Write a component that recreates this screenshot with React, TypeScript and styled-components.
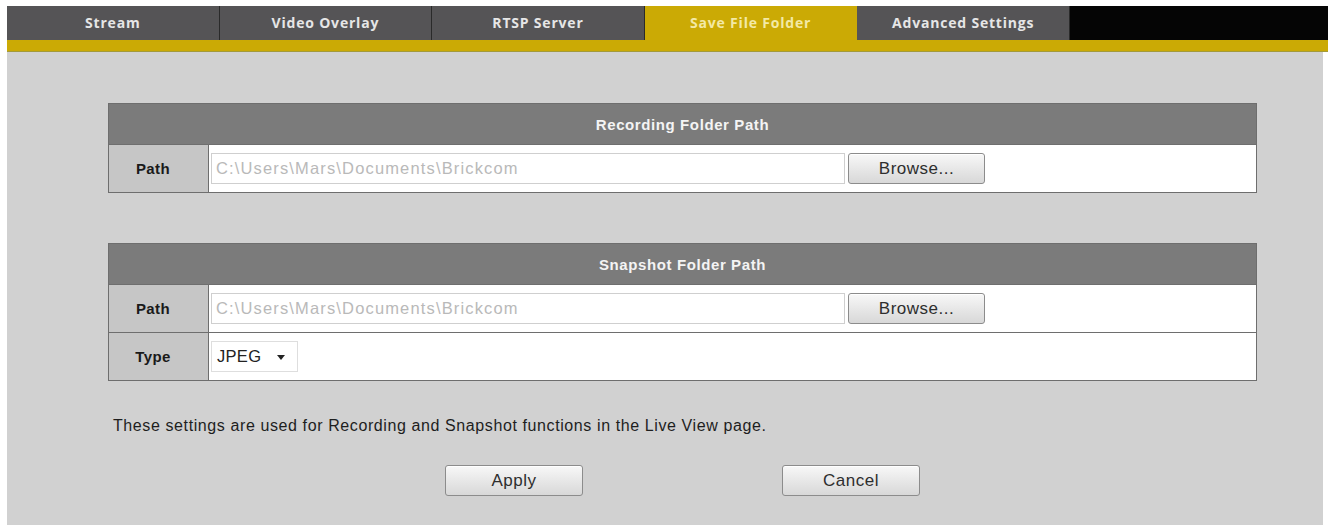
import React from 'react';
import styled, { createGlobalStyle } from 'styled-components';

const GlobalStyle = createGlobalStyle`
  html, body {
    margin: 0;
    padding: 0;
    background: #ffffff;
  }
  body {
    font-family: "Liberation Sans", Arial, sans-serif;
  }
`;

const Page = styled.div`
  padding: 6px 5px 4px 7px;
  width: 1328px;
  height: 529px;
  box-sizing: border-box;
`;

const Frame = styled.div`
  background: #d1d1d1;
  height: 100%;
  display: flex;
  flex-direction: column;
`;

const TabBar = styled.div`
  display: flex;
  height: 34px;
  background: #050505;
  margin-right: -5px;
`;

const Tab = styled.div<{ $active?: boolean }>`
  flex: 0 0 212.6px;
  display: flex;
  align-items: center;
  justify-content: center;
  box-sizing: border-box;
  background: ${p => (p.$active ? '#cbaa05' : '#555456')};
  border-right: 1px solid ${p => (p.$active ? '#cbaa05' : '#2a2a2a')};
  color: ${p => (p.$active ? '#f3e9a6' : '#e6e6e6')};
  font-family: "Open Sans", "DejaVu Sans", sans-serif;
  font-weight: 700;
  font-size: 14px;
  letter-spacing: 0.8px;
  padding-bottom: 2px;
`;

const YellowBar = styled.div`
  height: 11px;
  background: #cbaa05;
  border-bottom: 1px solid #a39a3a;
  margin-right: -5px;
`;

const Content = styled.div`
  padding: 51px 66px 0 101px;
  display: flex;
  flex-direction: column;
`;

const Panel = styled.div<{ $gap?: number }>`
  border: 1px solid #6e6e6e;
  background: #ffffff;
  margin-bottom: ${p => p.$gap ?? 0}px;
`;

const PanelHeader = styled.div`
  height: 40px;
  box-sizing: border-box;
  background: #7b7b7b;
  display: flex;
  align-items: center;
  justify-content: center;
  color: #f4f4f4;
  font-weight: 700;
  font-size: 15px;
  letter-spacing: 0.6px;
  padding-top: 1px;
`;

const Row = styled.div`
  display: grid;
  grid-template-columns: 100px 1fr;
  height: 47px;
  border-top: 1px solid #6e6e6e;
`;

const Label = styled.div`
  background: #c6c6c6;
  border-right: 1px solid #6e6e6e;
  display: flex;
  align-items: center;
  justify-content: center;
  padding-right: 11px;
  font-weight: 700;
  font-size: 15px;
  color: #1a1a1a;
  letter-spacing: 0.4px;
`;

const Field = styled.div`
  display: flex;
  align-items: center;
  padding-left: 2px;
  gap: 3px;
`;

const PathInput = styled.div`
  width: 634px;
  height: 31px;
  box-sizing: border-box;
  border: 1px solid #cfcfcf;
  display: flex;
  align-items: center;
  padding-left: 4px;
  font-size: 16.5px;
  letter-spacing: 1.15px;
  color: #b9b9b9;
  white-space: nowrap;
`;

const Button = styled.div<{ $w?: number }>`
  width: ${p => p.$w ?? 137}px;
  height: 31px;
  box-sizing: border-box;
  border: 1px solid #8c8c8c;
  border-radius: 3px;
  background: linear-gradient(#f8f8f8, #e6e6e6 55%, #d8d8d8);
  box-shadow: inset 0 1px 0 #ffffff;
  display: flex;
  align-items: center;
  justify-content: center;
  font-size: 17px;
  letter-spacing: 0.5px;
  color: #2e2e2e;
`;

const Select = styled.div`
  width: 87px;
  height: 31px;
  box-sizing: border-box;
  border: 1px solid #dedede;
  display: flex;
  align-items: center;
  padding-left: 5px;
  gap: 16px;
  font-size: 16.5px;
  letter-spacing: 0.3px;
  color: #222222;
`;

const Caret = styled.span`
  width: 0;
  height: 0;
  border-left: 4px solid transparent;
  border-right: 4px solid transparent;
  border-top: 5px solid #222222;
  margin-top: 2px;
`;

const Note = styled.div`
  margin-top: 36px;
  padding-left: 5px;
  font-size: 16px;
  letter-spacing: 0.6px;
  color: #1e1e1e;
`;

const Actions = styled.div`
  margin-top: 30px;
  display: flex;
  justify-content: center;
  gap: 199px;
`;

const path = 'C:\\Users\\Mars\\Documents\\Brickcom';

const tabs = ['Stream', 'Video Overlay', 'RTSP Server', 'Save File Folder', 'Advanced Settings'];

export default function App() {
  return (
    <>
      <GlobalStyle />
      <Page>
        <Frame>
          <TabBar>
            {tabs.map(t => (
              <Tab key={t} $active={t === 'Save File Folder'}>{t}</Tab>
            ))}
          </TabBar>
          <YellowBar />
          <Content>
            <Panel $gap={50}>
              <PanelHeader>Recording Folder Path</PanelHeader>
              <Row>
                <Label>Path</Label>
                <Field>
                  <PathInput>{path}</PathInput>
                  <Button>Browse...</Button>
                </Field>
              </Row>
            </Panel>
            <Panel>
              <PanelHeader>Snapshot Folder Path</PanelHeader>
              <Row>
                <Label>Path</Label>
                <Field>
                  <PathInput>{path}</PathInput>
                  <Button>Browse...</Button>
                </Field>
              </Row>
              <Row>
                <Label>Type</Label>
                <Field>
                  <Select>
                    JPEG <Caret />
                  </Select>
                </Field>
              </Row>
            </Panel>
            <Note>These settings are used for Recording and Snapshot functions in the Live View page.</Note>
            <Actions>
              <Button $w={138}>Apply</Button>
              <Button $w={138}>Cancel</Button>
            </Actions>
          </Content>
        </Frame>
      </Page>
    </>
  );
}
